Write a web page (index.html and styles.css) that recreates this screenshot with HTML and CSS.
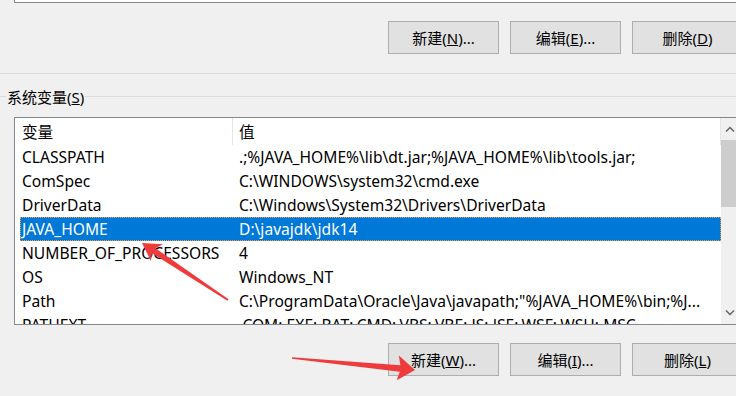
FILE: index.html
```html
<!DOCTYPE html>
<html lang="zh-CN">

<head>
  <meta charset="UTF-8">
  <title>环境变量</title>
  <link rel="stylesheet" href="styles.css">
</head>

<body>
  <div class="dialog">
    <div class="user-list"></div>
    <div class="btn-row first">
      <button class="btn">新建(<u>N</u>)...</button>
      <button class="btn">编辑(<u>E</u>)...</button>
      <button class="btn">删除(<u>D</u>)</button>
    </div>
    <div class="divider"></div>
    <div class="group-head"><span>系统变量(<u>S</u>)</span></div>
    <div class="listbox">
      <div class="list">
        <div class="list-head">
          <div class="col-name">变量</div>
          <div class="col-value">值</div>
        </div>
        <div class="row"><div class="col-name">CLASSPATH</div><div class="col-value">.;%JAVA_HOME%\lib\dt.jar;%JAVA_HOME%\lib\tools.jar;</div></div>
        <div class="row"><div class="col-name">ComSpec</div><div class="col-value">C:\WINDOWS\system32\cmd.exe</div></div>
        <div class="row"><div class="col-name">DriverData</div><div class="col-value">C:\Windows\System32\Drivers\DriverData</div></div>
        <div class="row selected"><div class="col-name">JAVA_HOME</div><div class="col-value">D:\javajdk\jdk14</div></div>
        <div class="row"><div class="col-name">NUMBER_OF_PROCESSORS</div><div class="col-value">4</div></div>
        <div class="row"><div class="col-name">OS</div><div class="col-value">Windows_NT</div></div>
        <div class="row"><div class="col-name">Path</div><div class="col-value">C:\ProgramData\Oracle\Java\javapath;"%JAVA_HOME%\bin;%J...</div></div>
        <div class="row"><div class="col-name">PATHEXT</div><div class="col-value">.COM;.EXE;.BAT;.CMD;.VBS;.VBE;.JS;.JSE;.WSF;.WSH;.MSC</div></div>
      </div>
      <div class="scrollbar">
        <div class="sb-btn">
          <svg width="10" height="6" viewBox="0 0 10 6"><path d="M1 5.5 L5 1.5 L9 5.5" fill="none" stroke="#606060" stroke-width="1.4"/></svg>
        </div>
        <div class="sb-thumb"></div>
        <div class="sb-track"></div>
        <div class="sb-btn">
          <svg width="10" height="6" viewBox="0 0 10 6"><path d="M1 0.5 L5 4.5 L9 0.5" fill="none" stroke="#606060" stroke-width="1.4"/></svg>
        </div>
      </div>
    </div>
    <div class="btn-row">
      <button class="btn">新建(<u>W</u>)...</button>
      <button class="btn">编辑(<u>I</u>)...</button>
      <button class="btn">删除(<u>L</u>)</button>
    </div>
  </div>

  <svg class="arrows" width="736" height="396" viewBox="0 0 736 396">
    <polygon points="142,243 163,244.3 155.4,248.2 228.6,299.2 227.4,300.8 152,253.2 150.9,260.9" />
    <polygon points="415,370 398.8,355.5 400.4,365.3 292,357.3 292,358.7 399.8,371.8 396.7,380.3" />
  </svg>
</body>

</html>
```

FILE: styles.css
```css
* {
  box-sizing: border-box;
}

html,
body {
  margin: 0;
  width: 736px;
  height: 396px;
  overflow: hidden;
}

body {
  position: relative;
  background-color: #f0f0f0;
  color: #000;
  font-family: "Noto Sans", "Noto Sans CJK SC", sans-serif;
  font-size: 15px;
}

.user-list {
  width: 725px;
  height: 3px;
  margin-left: 14px;
  background-color: #fff;
  border-left: 1px solid #828790;
  border-bottom: 1px solid #828790;
}

.btn-row {
  display: flex;
  gap: 11px;
  padding-left: 388px;
  margin-top: 18px;
}

.btn {
  flex-shrink: 0;
  width: 111px;
  height: 33px;
  padding: 0;
  border: 1px solid #adadad;
  background-color: #e1e1e1;
  color: #000;
  font-family: inherit;
  font-size: 15px;
}

.divider {
  height: 1px;
  margin-top: 19px;
  background-color: #dcdcdc;
}

.group-head {
  display: flex;
  align-items: center;
  height: 22px;
  margin-top: 11px;
}

.group-head::before {
  content: "";
  width: 6px;
  height: 1px;
  background-color: #dcdcdc;
}

.group-head::after {
  content: "";
  flex: 1;
  height: 1px;
  background-color: #dcdcdc;
}

.group-head span {
  padding: 0 1px;
}

.listbox {
  display: flex;
  width: 725px;
  height: 208px;
  margin-top: 10px;
  margin-left: 14px;
  border: 1px solid #828790;
  background-color: #fff;
}

.list {
  flex: 1;
  overflow: hidden;
  font-size: 15.6px;
}

.list-head {
  display: flex;
  height: 27px;
}

.list-head div {
  display: flex;
  align-items: center;
  border-right: 1px solid #e5e5e5;
}

.list-head .col-name {
  width: 218px;
  padding-left: 7px;
}

.list-head .col-value {
  flex: 1;
  padding-left: 6px;
}

.row {
  display: flex;
  align-items: center;
  height: 24px;
  margin-left: 5px;
  white-space: nowrap;
}

.row .col-name {
  flex-shrink: 0;
  width: 217px;
  padding-left: 2px;
}

.row .col-value {
  padding-left: 2px;
}

.row.selected {
  background-color: #0078d7;
  color: #fff;
  outline: 1px dotted #f29d3f;
  outline-offset: -1px;
}

.scrollbar {
  display: flex;
  flex-direction: column;
  width: 17px;
  background-color: #f0f0f0;
}

.sb-btn {
  display: flex;
  align-items: center;
  justify-content: center;
  height: 22px;
}

.sb-thumb {
  height: 67px;
  background-color: #cdcdcd;
}

.sb-track {
  flex: 1;
}

.arrows {
  position: absolute;
  top: 0;
  left: 0;
  pointer-events: none;
}

.arrows polygon {
  fill: #ef3b3b;
}
```
